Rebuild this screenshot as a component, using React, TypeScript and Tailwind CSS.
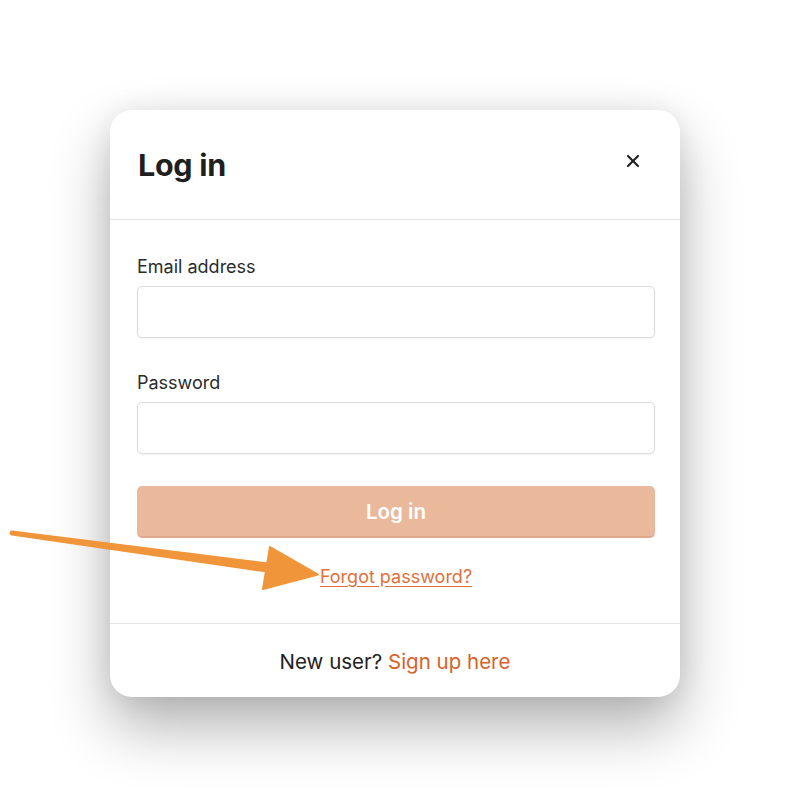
import { X } from "lucide-react"

function Field({ label, type }: { label: string; type: string }) {
  return (
    <div className="flex flex-col">
      <label className="text-[18px] leading-6 text-[#2b2b2b] mb-[7px]">{label}</label>
      <input
        type={type}
        className="h-[52px] w-full rounded-[5px] border border-[#dcdcdc] bg-white shadow-[0_1px_2px_rgba(0,0,0,0.06)] outline-none"
      />
    </div>
  )
}

function Arrow() {
  return (
    <svg className="absolute left-0 top-0 pointer-events-none" width="790" height="808" viewBox="0 0 790 808">
      <path
        d="M12.3 530.5 L275.7 563.6 L274.3 573.6 L11.7 535.5 A2.5 2.5 0 0 1 12.3 530.5 Z"
        fill="#f0953a"
      />
      <path d="M270 547 L318 574.5 L263 589 Z" fill="#f0953a" strokeLinejoin="round" stroke="#f0953a" strokeWidth="2" />
    </svg>
  )
}

export default function App() {
  return (
    <div className="relative min-h-[808px] bg-white pt-[110px] pl-[110px] font-['Inter',sans-serif]">
      <div className="w-[570px] rounded-[22px] bg-white shadow-[0_30px_60px_rgba(0,0,0,0.3),0_0_28px_rgba(0,0,0,0.08)]">
        <div className="flex h-[110px] items-center justify-between border-b border-[#e6e6e6] pl-[28px] pr-[37px]">
          <h2 className="text-[30.5px] font-bold text-[#1f1f1f] tracking-[-0.3px]">Log in</h2>
          <X className="w-[20px] h-[20px] text-[#222] -mt-[8px]" strokeWidth={2.6} />
        </div>
        <div className="pl-[27px] pr-[25px] pt-[35px] pb-[34px]">
          <div className="flex flex-col gap-[33px]">
            <Field label="Email address" type="email" />
            <Field label="Password" type="password" />
          </div>
          <button className="mt-[32px] h-[52px] w-full rounded-[5px] border-b-2 border-[#e1a98b] bg-[#eab89b] pt-[3px] text-[20.5px] font-semibold text-white">
            Log in
          </button>
          <div className="mt-[27px] text-center">
            <a className="text-[18px] leading-6 text-[#e0703c] underline underline-offset-[3px]">Forgot password?</a>
          </div>
        </div>
        <div className="flex h-[74px] items-center justify-center border-t border-[#e6e6e6] pt-[4px] text-[20.5px] text-[#222]">
          <span>New user?&nbsp;</span>
          <a className="text-[#d6622c]">Sign up here</a>
        </div>
      </div>
      <Arrow />
    </div>
  )
}
